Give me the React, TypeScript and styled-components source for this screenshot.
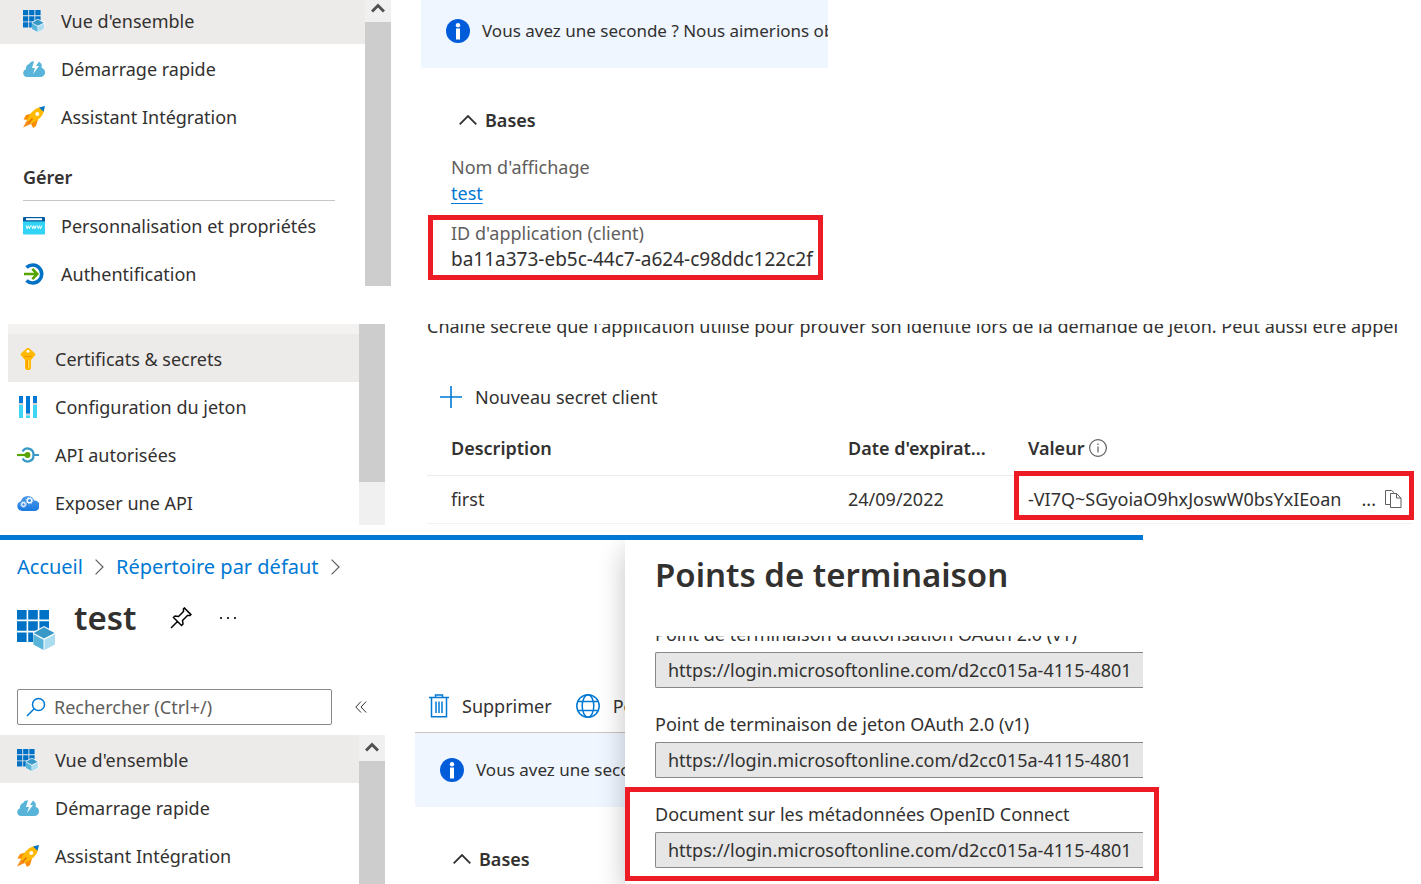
import React from 'react';
import styled, { createGlobalStyle, css } from 'styled-components';

const GlobalStyle = createGlobalStyle`
  *, *::before, *::after { box-sizing: border-box; }
  html, body { margin: 0; background: #fff; }
  body {
    font-family: 'Noto Sans', 'Open Sans', sans-serif;
    font-size: 18px;
    line-height: 26px;
    color: #323130;
  }
  a { color: inherit; text-decoration: none; }
  button, input { font: inherit; color: inherit; }
  svg { display: block; flex: none; }
`;

/* ---------- icons ---------- */

const GridCube = ({ size = 22 }: { size?: number }) => (
  <svg width={size} height={size} viewBox="0 0 40 40">
    <path
      fill="#0072c6"
      d="M0 0h9.6v9.6H0zM11.2 0h9.6v9.6h-9.6zM22.4 0H32v9.6h-9.6zM0 11.2h9.6v9.6H0zM11.2 11.2h9.6v9.6h-9.6zM22.4 11.2H32v9.6h-9.6zM0 22.4h9.6V32H0zM11.2 22.4h9.6V32h-9.6z"
    />
    <path fill="#fff" opacity=".9" d="M27 16l12 6v13l-12 6-11-6V22z" />
    <path fill="#3999c6" d="M27 17.2l10.5 5.8L27 28.6 16.8 23z" />
    <path fill="#59b4d9" d="M16.3 24.2l10.2 5.6V40l-10.2-5.4z" />
    <path fill="#abdcf0" d="M38 24.2l-10.5 5.6V40L38 34.6z" />
  </svg>
);

const CloudBolt = () => (
  <svg width="22" height="22" viewBox="0 0 22 22">
    <path
      fill="#59b4d9"
      d="M4 19a4 4 0 0 1-1-7.8A5 5 0 0 1 6 6a5 5 0 0 1 5-2.6l-2 6.6h3l-2 6 6-8h-3l3-4.500a6 6 0 0 1 2.6 6.3A5 5 0 0 1 22 14a4.6 4.6 0 0 1-4 5z"
    />
  </svg>
);

const Rocket = () => (
  <svg width="22" height="22" viewBox="0 0 22 22">
    <path fill="#ff8c00" d="M9 7.500L3 9 .5 13.500l5.500.5zM15 13.500l-2 6.500-3 2-2.500-5.500z" />
    <path fill="#f78d1e" d="M5 12.500L0 21.500 9 17.500z" />
    <path fill="#ffb900" d="M17 1.300C10.500 3 6.500 8 4 14.300l3.700 3.700C14 15 19.500 11 21 5z" />
    <path fill="#0072c6" d="M22 0l-6 1.600 4.600 4.200z" />
    <circle cx="14.300" cy="8" r="2" fill="#fff" />
    <path stroke="#e3730d" strokeWidth="1.600" d="M9.500 12.500L5.500 17" />
  </svg>
);

const Www = () => (
  <svg width="22" height="22" viewBox="0 0 22 22">
    <path fill="#32d4f5" d="M0 6h22v12.500a1 1 0 0 1-1 1H1a1 1 0 0 1-1-1z" />
    <path fill="#005ba1" d="M1 2h20a1 1 0 0 1 1 1v3.500H0V3a1 1 0 0 1 1-1z" />
    <rect x="3" y="3.200" width="16" height="2" fill="#fff" />
    <path
      fill="none"
      stroke="#fff"
      strokeWidth="1"
      d="M3 10.500l1.200 3.200 1.100-3 1.100 3 1.200-3.200M8.600 10.500l1.200 3.200 1.100-3 1.100 3 1.200-3.200M14.200 10.500l1.200 3.200 1.100-3 1.100 3 1.200-3.200"
    />
  </svg>
);

const AuthArrow = () => (
  <svg width="22" height="22" viewBox="0 0 22 22" fill="none">
    <path stroke="#0072c6" strokeWidth="3.600" d="M3.500 4.500A9 9 0 1 1 3.500 17.500" />
    <path stroke="#57a300" strokeWidth="2.600" d="M1 11h12.500M9.300 5.800l5 5.200-5 5.200" />
  </svg>
);

const Key = () => (
  <svg width="22" height="22" viewBox="0 0 22 22">
    <path
      fill="#ffb900"
      d="M9.500.5a2.500 2.500 0 0 1 3 0l5 4.500a2 2 0 0 1 0 3L14 12v8.500L12.500 22h-3L8 20.500V12L4.500 8a2 2 0 0 1 0-3z"
    />
    <circle cx="11" cy="3.200" r="1.500" fill="#fff" />
    <path stroke="#ff9300" strokeWidth="1.200" d="M7 8.500h8M10.200 12v8" />
    <path stroke="#ffe266" strokeWidth="1" d="M11.700 12v8" />
  </svg>
);

const Sliders = () => (
  <svg width="22" height="22" viewBox="0 0 22 22">
    <path fill="#0078d4" d="M2 0h4v7H2zM9 0h4v18H9zM16 0h4v7h-4z" />
    <path fill="#d0d0d0" d="M2 7h4v2H2zM9 17.500h4v2H9zM16 7h4v2h-4z" />
    <path fill="#40d5f2" d="M2 9h4v13H2zM9 19.500h4V22H9zM16 9h4v13h-4z" />
  </svg>
);

const ApiPlug = () => (
  <svg width="22" height="22" viewBox="0 0 22 22" fill="none">
    <path stroke="#3999c6" strokeWidth="2.200" d="M5.600 7.500a5.800 5.800 0 0 1 10.800 3.500 5.800 5.800 0 0 1-10.800 3.500M16 11h6" />
    <path stroke="#57a300" strokeWidth="2.200" d="M0 11h10" />
    <circle cx="10.500" cy="11" r="2.900" fill="#57a300" />
  </svg>
);

const CloudGears = () => (
  <svg width="22" height="22" viewBox="0 0 22 22">
    <defs>
      <linearGradient id="cloud" x1="0" y1="0" x2="0" y2="1">
        <stop offset="0" stopColor="#4f9bea" />
        <stop offset="1" stopColor="#1a7be0" />
      </linearGradient>
    </defs>
    <path fill="url(#cloud)" d="M5 19a5 5 0 0 1-1-9.800A7 7 0 0 1 17.400 8.600 5.200 5.200 0 0 1 17.500 19z" />
    <g fill="none" stroke="#fff">
      <circle cx="6.500" cy="12.500" r="1.800" strokeWidth="1.200" />
      <circle cx="6.500" cy="12.500" r="2.700" strokeWidth="1" strokeDasharray="1 1.100" />
      <circle cx="12.500" cy="8.500" r="2.200" strokeWidth="1.300" />
      <circle cx="12.500" cy="8.500" r="3.300" strokeWidth="1" strokeDasharray="1.200 1.400" />
    </g>
  </svg>
);

const InfoFilled = () => (
  <svg width="24" height="24" viewBox="0 0 24 24">
    <circle cx="12" cy="12" r="12" fill="#015cda" />
    <circle cx="12" cy="6.200" r="2.200" fill="#fff" />
    <path fill="#fff" d="M10 9.500h4V20.500h-4z" />
  </svg>
);

const InfoOutline = () => (
  <svg width="18" height="18" viewBox="0 0 18 18" fill="none" stroke="#605e5c">
    <circle cx="9" cy="9" r="8.400" strokeWidth="1.200" />
    <path strokeWidth="1.200" d="M9 7.500v6M9 4.500V6" />
  </svg>
);

const ChevronUp = () => (
  <svg width="18" height="10" viewBox="0 0 18 10" fill="none" stroke="#323130" strokeWidth="1.800">
    <path d="M.7 9.300L9 1l8.300 8.300" />
  </svg>
);

const ChevronRight = () => (
  <svg width="9" height="16" viewBox="0 0 9 16" fill="none" stroke="#605e5c" strokeWidth="1.200">
    <path d="M.6.6L8 8 .6 15.400" />
  </svg>
);

const ScrollArrow = () => (
  <svg width="14" height="10" viewBox="0 0 14 10" fill="none" stroke="#505050" strokeWidth="3">
    <path d="M1 8.500l6-6 6 6" />
  </svg>
);

const Plus = () => (
  <svg width="24" height="24" viewBox="0 0 24 24" stroke="#0078d4" strokeWidth="1.600">
    <path d="M12 1v22M1 12h22" />
  </svg>
);

const Copy = () => (
  <svg width="17" height="18" viewBox="0 0 17 18" fill="none" stroke="#605e5c">
    <path d="M5.500 14.500h-5V.5h6l2.500 2" />
    <path fill="#fff" d="M5.500 3.500h6l4.500 4.500v9.500H5.500z" />
    <path d="M11.500 3.500V8H16" />
  </svg>
);

const Pin = () => (
  <svg width="22" height="22" viewBox="0 0 22 22" fill="none" stroke="#000" strokeWidth="1.500">
    <path d="M1 21l6.500-6.500M3.500 10.500l8 8 1.500-1.500-.5-3.500 5-5h2.500l.9-.9L14.400 1l-.9.9v2.600l-5 5-3.500-.5z" />
  </svg>
);

const Dots = () => (
  <svg width="18" height="4" viewBox="0 0 18 4" fill="#323130">
    <path d="M1 1h2v2H1zM8 1h2v2H8zM15 1h2v2h-2z" />
  </svg>
);

const SearchGlyph = () => (
  <svg width="20" height="20" viewBox="0 0 20 20" fill="none" stroke="#0078d4" strokeWidth="1.500">
    <circle cx="12.500" cy="7.500" r="6" />
    <path d="M8.200 11.800L1 19" />
  </svg>
);

const Collapse = () => (
  <svg width="12" height="12" viewBox="0 0 12 12" fill="none" stroke="#323130">
    <path d="M6 .5L.8 6 6 11.500M11.200.5L6 6l5.200 5.500" />
  </svg>
);

const Trash = () => (
  <svg width="20" height="24" viewBox="0 0 20 24" fill="none" stroke="#0078d4" strokeWidth="1.500">
    <path d="M0 3.500h20M6.500 3.500V1h7v2.500M2.500 3.500v19.300h15V3.500M7 7.500v11.500M10 7.500v11.500M13 7.500v11.500" />
  </svg>
);

const Globe = () => (
  <svg width="24" height="24" viewBox="0 0 24 24" fill="none" stroke="#0078d4" strokeWidth="1.500">
    <circle cx="12" cy="12" r="11.200" />
    <ellipse cx="12" cy="12" rx="5.800" ry="11.200" />
    <path d="M2 7.500h20M2 16.500h20" />
  </svg>
);

/* ---------- layout ---------- */

const Page = styled.div`
  display: flex;
  flex-direction: column;
  min-height: 100vh;
  overflow: hidden;
`;

const Overview = styled.section`
  display: flex;
  gap: 30px;
  height: 324px;
  overflow: hidden;
`;

const Secrets = styled.section`
  display: flex;
  gap: 42px;
  height: 211px;
  padding: 0 9px 0 8px;
`;

const Blade = styled.section`
  display: flex;
  flex: 1;
  margin-right: 278px;
  border-top: 5px solid #0078d4;
`;

/* ---------- side menu ---------- */

const Sidebar = styled.div<{ $width: number }>`
  display: flex;
  flex-direction: column;
  flex: none;
  width: ${p => p.$width}px;
`;

const MenuFrame = styled.div<{ $height?: number }>`
  display: flex;
  overflow: hidden;
  ${p => (p.$height ? css`height: ${p.$height}px;` : css`flex: 1;`)}
`;

const Menu = styled.nav<{ $scrolled?: boolean }>`
  flex: 1;
  margin-top: ${p => (p.$scrolled ? -4 : 0)}px;
`;

const MenuItem = styled.a<{ $indent: number; $active?: boolean }>`
  display: flex;
  align-items: center;
  gap: 16px;
  height: 48px;
  padding: 2px 0 0 ${p => p.$indent}px;
  background: ${p => (p.$active ? '#edebe9' : 'transparent')};
  white-space: nowrap;
`;

const MenuGroup = styled.h3`
  display: flex;
  align-items: flex-end;
  height: 61px;
  margin: 0 30px 0 23px;
  padding-bottom: 10px;
  border-bottom: 1px solid #c8c6c4;
  font-size: 18px;
  font-weight: 600;
`;

const MenuEdge = styled.div`
  height: 10px;
  background: #f3f2f1;
`;

const Scrollbar = styled.div<{ $scrolled?: boolean }>`
  display: flex;
  flex-direction: column;
  width: 26px;
  margin-top: ${p => (p.$scrolled ? -4 : 0)}px;
  background: #f0f0f0;
`;

const ScrollButton = styled.button`
  display: flex;
  align-items: center;
  justify-content: center;
  height: 26px;
  padding: 0 0 2px;
  border: 0;
  background: none;
`;

const ScrollThumb = styled.div<{ $height?: number }>`
  background: #cdcdcd;
  ${p => (p.$height ? css`height: ${p.$height}px;` : css`flex: 1;`)}
`;

/* ---------- shared content ---------- */

const Content = styled.div`
  flex: 1;
  min-width: 0;
`;

const Banner = styled.div<{ $height: number; $shift?: number }>`
  display: flex;
  align-items: center;
  gap: 12px;
  max-width: 407px;
  height: ${p => p.$height}px;
  padding: 0 0 ${p => p.$shift ?? 0}px 25px;
  border-radius: 0 0 0 3px;
  background: #eff6ff;
  font-size: 17px;
  white-space: nowrap;
  overflow: hidden;
`;

const BasesToggle = styled.button`
  display: flex;
  align-items: center;
  gap: 8px;
  margin: 39px 0 0 38px;
  padding: 0;
  border: 0;
  background: none;
  font-weight: 600;
`;

const Details = styled.dl`
  display: flex;
  flex-direction: column;
  gap: 1px;
  margin: 16px 0 0 7px;
`;

const Detail = styled.div<{ $highlight?: boolean }>`
  width: fit-content;
  padding: 0 5px 2px 18px;
  border: 5px solid ${p => (p.$highlight ? '#ed1c24' : 'transparent')};
`;

const Term = styled.dt`
  line-height: 26px;
  color: #605e5c;
`;

const Value = styled.dd`
  margin: 0;
  font-size: 19px;
  line-height: 27px;
`;

const ValueLink = styled.a`
  color: #0078d4;
  font-size: 18px;
  text-decoration: underline;
  text-underline-offset: 3px;
`;

/* ---------- secrets ---------- */

const Intro = styled.p`
  display: flex;
  align-items: flex-end;
  height: 15px;
  margin: 0;
  white-space: nowrap;
  overflow: hidden;
`;

const NewSecret = styled.button`
  display: flex;
  align-items: center;
  gap: 12px;
  margin: 45px 0 0 12px;
  padding: 0;
  border: 0;
  background: none;
`;

const SecretTable = styled.table`
  width: 100%;
  margin-top: 11px;
  border-collapse: collapse;
  table-layout: fixed;
  text-align: left;
`;

const HeadCell = styled.th<{ $width?: number }>`
  width: ${p => (p.$width ? `${p.$width}px` : 'auto')};
  height: 54px;
  padding: 0 0 0 24px;
  border-bottom: 1px solid #edebe9;
  font-weight: 600;
  white-space: nowrap;
`;

const HeadLabel = styled.span`
  display: flex;
  align-items: center;
  gap: 5px;
`;

const Cell = styled.td`
  position: relative;
  height: 48px;
  padding: 0 0 0 24px;
  border-bottom: 1px solid #f3f2f1;
`;

const SecretValue = styled.div`
  display: flex;
  align-items: center;
  gap: 9px;
  padding-right: 10px;
  white-space: nowrap;
`;

const SecretText = styled.span`
  flex: 1;
`;

const IconButton = styled.button`
  display: flex;
  padding: 0;
  border: 0;
  background: none;
`;

const CellHighlight = styled.div`
  position: absolute;
  inset: -5px -2px 3px 10px;
  border: 5px solid #ed1c24;
  pointer-events: none;
`;

/* ---------- application blade ---------- */

const Breadcrumb = styled.nav`
  display: flex;
  align-items: center;
  gap: 12px;
  margin: 14px 0 0 17px;
  color: #0078d4;
  font-size: 20px;
  white-space: nowrap;
`;

const TitleRow = styled.div`
  display: flex;
  align-items: center;
  height: 48px;
  margin: 14px 0 0 17px;
`;

const TitleIcon = styled.div`
  padding-top: 24px;
`;

const BladeTitle = styled.h1`
  margin: 0 34px 0 17px;
  font-size: 33px;
  line-height: 48px;
  font-weight: 600;
`;

const TitleActions = styled.div`
  display: flex;
  align-items: center;
  gap: 27px;
`;

const SearchRow = styled.div`
  display: flex;
  align-items: center;
  gap: 23px;
  margin: 47px 0 10px 17px;
`;

const SearchBox = styled.label`
  display: flex;
  align-items: center;
  gap: 8px;
  width: 315px;
  height: 36px;
  padding: 0 8px 1px;
  border: 1px solid #8a8886;
  border-radius: 2px;
`;

const SearchInput = styled.input`
  flex: 1;
  min-width: 0;
  padding: 0;
  border: 0;
  outline: 0;
  background: none;
  &::placeholder { color: #605e5c; opacity: 1; }
`;

const BladeContent = styled.div`
  flex: none;
  width: 210px;
  margin-left: 30px;
  overflow: hidden;
`;

const CommandBar = styled.div`
  display: flex;
  gap: 24px;
  height: 193px;
  padding: 0 0 13px 14px;
  align-items: flex-end;
  border-bottom: 1px solid #c8c6c4;
`;

const Command = styled.button`
  display: flex;
  align-items: center;
  gap: 13px;
  padding: 0;
  border: 0;
  background: none;
  white-space: nowrap;
`;

const Panel = styled.aside`
  position: relative;
  z-index: 1;
  flex: 1;
  min-width: 0;
  padding-left: 30px;
  background: #fff;
  &::before {
    content: '';
    position: absolute;
    inset: 0;
    z-index: -1;
    box-shadow: 0 10px 26px rgba(0, 0, 0, 0.24);
    clip-path: inset(0 0 0 -30px);
  }
`;

const PanelTitle = styled.h2`
  margin: 0;
  padding-top: 11px;
  font-size: 33px;
  line-height: 48px;
  font-weight: 600;
  white-space: nowrap;
`;

const Endpoints = styled.div`
  margin-top: 37px;
`;

const EndpointLabel = styled.label<{ $clipped?: boolean }>`
  display: flex;
  align-items: flex-end;
  height: ${p => (p.$clipped ? 16 : 54)}px;
  padding-bottom: 4px;
  line-height: 28px;
  white-space: nowrap;
  overflow: hidden;
`;

const EndpointInput = styled.input`
  display: block;
  width: 100%;
  height: 36px;
  padding: 0 0 0 12px;
  border: 1px solid #8a8886;
  border-right: 0;
  border-radius: 2px 0 0 2px;
  outline: 0;
  background: #e6e6e6;
`;

const HighlightedEndpoint = styled.div`
  position: relative;
  &::after {
    content: '';
    position: absolute;
    inset: 9px -16px -13px -30px;
    border: 5px solid #ed1c24;
    pointer-events: none;
  }
`;

const ENDPOINT_URL = 'https://login.microsoftonline.com/d2cc015a-4115-4801';

const MainItems = ({ indent }: { indent: number }) => (
  <>
    <MenuItem href="#overview" $indent={indent} $active><GridCube />Vue d'ensemble</MenuItem>
    <MenuItem href="#quickstart" $indent={indent}><CloudBolt />Démarrage rapide</MenuItem>
    <MenuItem href="#assistant" $indent={indent}><Rocket />Assistant Intégration</MenuItem>
  </>
);

const ScrollUp = () => (
  <ScrollButton type="button" aria-label="Défiler vers le haut"><ScrollArrow /></ScrollButton>
);

export default function App() {
  return (
    <>
      <GlobalStyle />
      <Page>
        <Overview>
          <Sidebar $width={391}>
            <MenuFrame $height={286}>
              <Menu $scrolled>
                <MainItems indent={23} />
                <MenuGroup>Gérer</MenuGroup>
                <MenuItem href="#branding" $indent={23}><Www />Personnalisation et propriétés</MenuItem>
                <MenuItem href="#authentication" $indent={23}><AuthArrow />Authentification</MenuItem>
              </Menu>
              <Scrollbar $scrolled><ScrollUp /><ScrollThumb /></Scrollbar>
            </MenuFrame>
          </Sidebar>
          <Content>
            <Banner $height={68} $shift={6}><InfoFilled />Vous avez une seconde ? Nous aimerions obtenir</Banner>
            <BasesToggle type="button"><ChevronUp />Bases</BasesToggle>
            <Details>
              <Detail>
                <Term>Nom d'affichage</Term>
                <Value><ValueLink href="#test">test</ValueLink></Value>
              </Detail>
              <Detail $highlight>
                <Term>ID d'application (client)</Term>
                <Value>ba11a373-eb5c-44c7-a624-c98ddc122c2f</Value>
              </Detail>
            </Details>
          </Content>
        </Overview>

        <Secrets>
          <Sidebar $width={377}>
            <MenuFrame $height={201}>
              <Menu>
                <MenuEdge />
                <MenuItem href="#secrets" $indent={9} $active><Key />Certificats &amp; secrets</MenuItem>
                <MenuItem href="#token" $indent={9}><Sliders />Configuration du jeton</MenuItem>
                <MenuItem href="#permissions" $indent={9}><ApiPlug />API autorisées</MenuItem>
                <MenuItem href="#expose" $indent={9}><CloudGears />Exposer une API</MenuItem>
              </Menu>
              <Scrollbar><ScrollThumb $height={158} /></Scrollbar>
            </MenuFrame>
          </Sidebar>
          <Content>
            <Intro>Chaîne secrète que l'application utilise pour prouver son identité lors de la demande de jeton. Peut aussi être appel</Intro>
            <NewSecret type="button"><Plus />Nouveau secret client</NewSecret>
            <SecretTable>
              <thead>
                <tr>
                  <HeadCell scope="col">Description</HeadCell>
                  <HeadCell scope="col" $width={180}>Date d'expirat...</HeadCell>
                  <HeadCell scope="col" $width={408}><HeadLabel>Valeur<InfoOutline /></HeadLabel></HeadCell>
                </tr>
              </thead>
              <tbody>
                <tr>
                  <Cell>first</Cell>
                  <Cell>24/09/2022</Cell>
                  <Cell>
                    <SecretValue>
                      <SecretText>-VI7Q~SGyoiaO9hxJoswW0bsYxIEoan</SecretText>
                      <span>...</span>
                      <IconButton type="button" aria-label="Copier"><Copy /></IconButton>
                    </SecretValue>
                    <CellHighlight />
                  </Cell>
                </tr>
              </tbody>
            </SecretTable>
          </Content>
        </Secrets>

        <Blade>
          <Sidebar $width={385}>
            <Breadcrumb aria-label="Fil d'Ariane">
              <a href="#home">Accueil</a><ChevronRight />
              <a href="#directory">Répertoire par défaut</a><ChevronRight />
            </Breadcrumb>
            <TitleRow>
              <TitleIcon><GridCube size={40} /></TitleIcon>
              <BladeTitle>test</BladeTitle>
              <TitleActions>
                <IconButton type="button" aria-label="Épingler"><Pin /></IconButton>
                <IconButton type="button" aria-label="Plus d'actions"><Dots /></IconButton>
              </TitleActions>
            </TitleRow>
            <SearchRow>
              <SearchBox>
                <SearchGlyph />
                <SearchInput type="text" aria-label="Rechercher" placeholder="Rechercher (Ctrl+/)" />
              </SearchBox>
              <IconButton type="button" aria-label="Réduire le menu"><Collapse /></IconButton>
            </SearchRow>
            <MenuFrame>
              <Menu><MainItems indent={17} /></Menu>
              <Scrollbar><ScrollUp /><ScrollThumb /></Scrollbar>
            </MenuFrame>
          </Sidebar>
          <BladeContent>
            <CommandBar>
              <Command type="button"><Trash />Supprimer</Command>
              <Command type="button"><Globe />Points</Command>
            </CommandBar>
            <Banner $height={74}><InfoFilled />Vous avez une seconde</Banner>
            <BasesToggle type="button"><ChevronUp />Bases</BasesToggle>
          </BladeContent>
          <Panel>
            <PanelTitle>Points de terminaison</PanelTitle>
            <Endpoints>
              <EndpointLabel $clipped htmlFor="authorize">Point de terminaison d'autorisation OAuth 2.0 (v1)</EndpointLabel>
              <EndpointInput id="authorize" readOnly value={ENDPOINT_URL} />
              <EndpointLabel htmlFor="token">Point de terminaison de jeton OAuth 2.0 (v1)</EndpointLabel>
              <EndpointInput id="token" readOnly value={ENDPOINT_URL} />
              <HighlightedEndpoint>
                <EndpointLabel htmlFor="metadata">Document sur les métadonnées OpenID Connect</EndpointLabel>
                <EndpointInput id="metadata" readOnly value={ENDPOINT_URL} />
              </HighlightedEndpoint>
            </Endpoints>
          </Panel>
        </Blade>
      </Page>
    </>
  );
}
